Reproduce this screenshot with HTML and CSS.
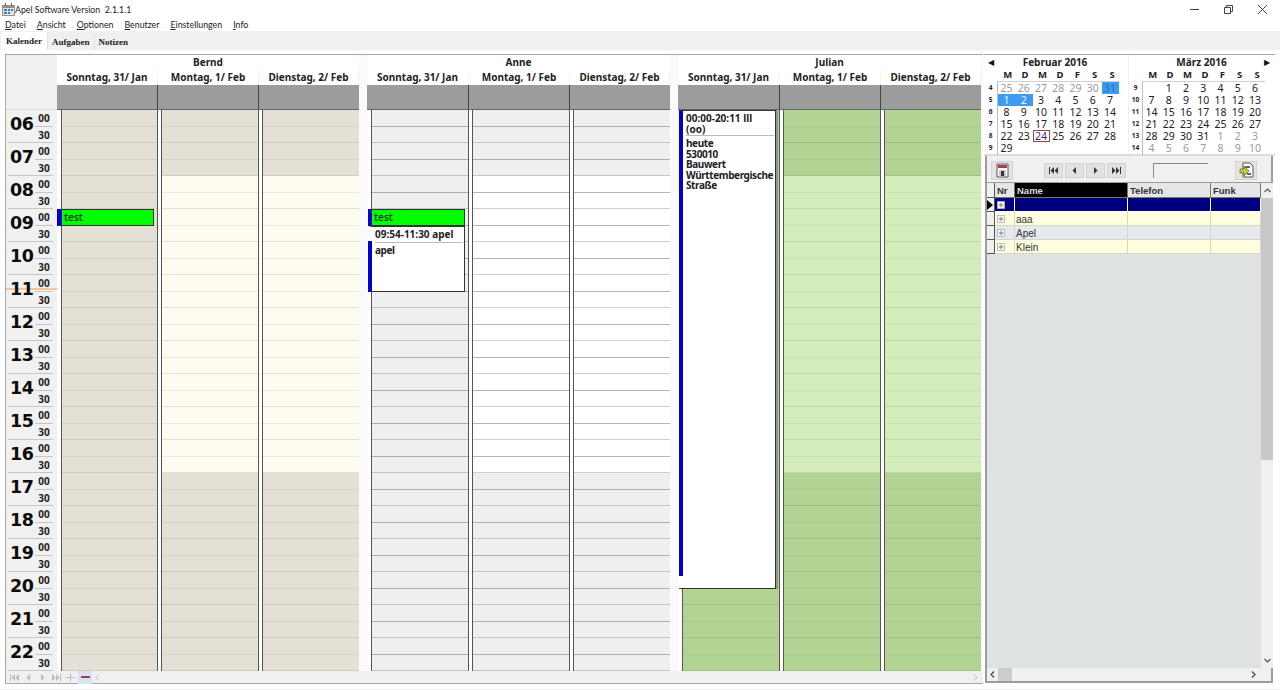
FILE: index.html
```html
<!DOCTYPE html>
<html lang="de">
<head>
<meta charset="utf-8">
<title>Apel Software</title>
<link rel="stylesheet" href="styles.css">
</head>
<body>
<svg class="defs" width="0" height="0">
  <symbol id="first" viewBox="0 0 9 7"><path d="M0 0h1v7H0zM5 0v7L1.500 3.500zM9 0v7L5.500 3.500z"/></symbol>
  <symbol id="prev" viewBox="0 0 9 7"><path d="M6 0v7L2.500 3.500z"/></symbol>
  <symbol id="next" viewBox="0 0 9 7"><path d="M3 0v7l3.500-3.500z"/></symbol>
  <symbol id="last" viewBox="0 0 9 7"><path d="M8 0h1v7H8zM4 0v7l3.500-3.500zM0 0v7l3.500-3.500z"/></symbol>
  <symbol id="plusbox" viewBox="0 0 9 9"><path d="M.5.500h8v8h-8z" fill="#f4f6f8" stroke="#aab4bc"/><path d="M2 4h5v1H2zM4 2h1v5H4z" fill="#777"/></symbol>
</svg>

<header class="titlebar">
  <svg class="appicon" width="13" height="13" viewBox="0 0 13 13"><path d="M0 2h13v11H0z" fill="#9a8f88"/><path d="M1 5h11v7H1z" fill="#dfe6ee"/><path d="M2 6h3v2H2zM6 6h2v2H6zM9 6h2v2H9zM2 9h3v2H2zM6 9h2v2H6z" fill="#3f78b5"/><path d="M3 0h1v3H3zM9 0h1v3H9z" fill="#7a5a50"/></svg>
  <span class="apptitle">Apel Software Version&nbsp; 2.1.1.1</span>
  <div class="winbtns">
    <svg width="11" height="11" viewBox="0 0 11 11"><path d="M1 5.500h9" stroke="#444"/></svg>
    <svg width="11" height="11" viewBox="0 0 11 11"><path d="M1.500 3.500h6v6h-6zM3.500 3.500v-2h6v6h-2" fill="none" stroke="#444"/></svg>
    <svg width="11" height="11" viewBox="0 0 11 11"><path d="M1 1l9 9M10 1l-9 9" stroke="#444"/></svg>
  </div>
</header>

<nav class="menubar">
  <span><u>D</u>atei</span><span><u>A</u>nsicht</span><span><u>O</u>ptionen</span><span><u>B</u>enutzer</span><span><u>E</u>instellungen</span><span><u>I</u>nfo</span>
</nav>

<div class="tabs">
  <span class="tab active">Kalender</span><span class="tab">Aufgaben</span><span class="tab">Notizen</span>
</div>

<main class="workspace">
  <section class="calendar">
    <div class="calgrid">
      <div class="timecol">
        <div class="timehead"></div>
        <div class="hours">
          <div class="hour"><b>06</b><div class="mins"><span>00</span><span>30</span></div></div>
          <div class="hour"><b>07</b><div class="mins"><span>00</span><span>30</span></div></div>
          <div class="hour"><b>08</b><div class="mins"><span>00</span><span>30</span></div></div>
          <div class="hour"><b>09</b><div class="mins"><span>00</span><span>30</span></div></div>
          <div class="hour"><b>10</b><div class="mins"><span>00</span><span>30</span></div></div>
          <div class="hour"><i class="nowline"></i><b>11</b><div class="mins"><span>00</span><span>30</span></div></div>
          <div class="hour"><b>12</b><div class="mins"><span>00</span><span>30</span></div></div>
          <div class="hour"><b>13</b><div class="mins"><span>00</span><span>30</span></div></div>
          <div class="hour"><b>14</b><div class="mins"><span>00</span><span>30</span></div></div>
          <div class="hour"><b>15</b><div class="mins"><span>00</span><span>30</span></div></div>
          <div class="hour"><b>16</b><div class="mins"><span>00</span><span>30</span></div></div>
          <div class="hour"><b>17</b><div class="mins"><span>00</span><span>30</span></div></div>
          <div class="hour"><b>18</b><div class="mins"><span>00</span><span>30</span></div></div>
          <div class="hour"><b>19</b><div class="mins"><span>00</span><span>30</span></div></div>
          <div class="hour"><b>20</b><div class="mins"><span>00</span><span>30</span></div></div>
          <div class="hour"><b>21</b><div class="mins"><span>00</span><span>30</span></div></div>
          <div class="hour"><b>22</b><div class="mins"><span>00</span><span>30</span></div></div>
        </div>
      </div>

      <div class="res bernd">
        <div class="resname">Bernd</div>
        <div class="heads"><span>Sonntag, 31/ Jan</span><span>Montag, 1/ Feb</span><span>Dienstag, 2/ Feb</span></div>
        <div class="strips"><i></i><i></i><i></i></div>
        <div class="days">
          <div class="day sun"><div class="cells"><div class="s1"></div><div class="s2"></div><div class="s3"></div></div>
            <div class="ev evb"><div class="evhead">test</div></div>
          </div>
          <div class="day"><div class="cells"><div class="s1"></div><div class="s2"></div><div class="s3"></div></div></div>
          <div class="day"><div class="cells"><div class="s1"></div><div class="s2"></div><div class="s3"></div></div></div>
        </div>
      </div>

      <div class="res anne">
        <div class="resname">Anne</div>
        <div class="heads"><span>Sonntag, 31/ Jan</span><span>Montag, 1/ Feb</span><span>Dienstag, 2/ Feb</span></div>
        <div class="strips"><i></i><i></i><i></i></div>
        <div class="days">
          <div class="day sun"><div class="cells"><div class="s1"></div><div class="s2"></div><div class="s3"></div></div>
            <div class="ev eva"><div class="evhead">test</div></div>
            <div class="box boxa"><div class="boxtime">09:54-11:30 apel</div><div class="boxbody">apel</div></div>
          </div>
          <div class="day"><div class="cells"><div class="s1"></div><div class="s2"></div><div class="s3"></div></div></div>
          <div class="day"><div class="cells"><div class="s1"></div><div class="s2"></div><div class="s3"></div></div></div>
        </div>
      </div>

      <div class="res julian">
        <div class="resname">Julian</div>
        <div class="heads"><span>Sonntag, 31/ Jan</span><span>Montag, 1/ Feb</span><span>Dienstag, 2/ Feb</span></div>
        <div class="strips"><i></i><i></i><i></i></div>
        <div class="days">
          <div class="day sun"><div class="cells"><div class="s1"></div><div class="s2"></div><div class="s3"></div></div>
            <div class="box boxj"><div class="boxtime">00:00-20:11 lll<br>(oo)</div><div class="boxbody">heute<br>530010<br>Bauwert<br>Württembergische<br>Straße</div></div>
          </div>
          <div class="day"><div class="cells"><div class="s1"></div><div class="s2"></div><div class="s3"></div></div></div>
          <div class="day"><div class="cells"><div class="s1"></div><div class="s2"></div><div class="s3"></div></div></div>
        </div>
      </div>
    </div>
    <div class="calbar">
      <svg class="ci" width="9" height="7"><use href="#first"/></svg>
      <svg class="ci" width="9" height="7"><use href="#prev"/></svg>
      <svg class="ci" width="9" height="7"><use href="#next"/></svg>
      <svg class="ci" width="9" height="7"><use href="#last"/></svg>
      <svg class="ci" width="9" height="9" viewBox="0 0 9 9"><path d="M0 4h9v1H0zM4 0h1v9H4z"/></svg>
      <span class="minus"><svg width="9" height="3" viewBox="0 0 9 3"><path d="M0 0h9v2H0z" fill="#c0304c"/></svg></span>
      <svg class="ci" width="5" height="7" viewBox="0 0 5 7"><path d="M4 .500L1 3.500l3 3" fill="none" stroke="#bbb"/></svg>
      <svg class="ci right" width="5" height="7" viewBox="0 0 5 7"><path d="M1 .500l3 3-3 3" fill="none" stroke="#bbb"/></svg>
    </div>
  </section>

  <aside class="side">
    <div class="months">
      <div class="month">
        <div class="mtitle"><span class="arr">◀</span><span class="mname">Februar 2016</span></div>
        <div class="dow"><b>M</b><b>D</b><b>M</b><b>D</b><b>F</b><b>S</b><b>S</b></div>
        <div class="mbody">
          <div class="wk"><b>4</b><b>5</b><b>6</b><b>7</b><b>8</b><b>9</b></div>
          <div class="dgrid">
            <span class="g">25</span><span class="g">26</span><span class="g">27</span><span class="g">28</span><span class="g">29</span><span class="g">30</span><span class="sel g">31</span>
            <span class="sel">1</span><span class="sel">2</span><span>3</span><span>4</span><span>5</span><span>6</span><span>7</span>
            <span>8</span><span>9</span><span>10</span><span>11</span><span>12</span><span>13</span><span>14</span>
            <span>15</span><span>16</span><span>17</span><span>18</span><span>19</span><span>20</span><span>21</span>
            <span>22</span><span>23</span><span class="today">24</span><span>25</span><span>26</span><span>27</span><span>28</span>
            <span>29</span>
          </div>
        </div>
      </div>
      <div class="month">
        <div class="mtitle"><span class="mname">März 2016</span><span class="arr">▶</span></div>
        <div class="dow"><b>M</b><b>D</b><b>M</b><b>D</b><b>F</b><b>S</b><b>S</b></div>
        <div class="mbody">
          <div class="wk"><b>9</b><b>10</b><b>11</b><b>12</b><b>13</b><b>14</b></div>
          <div class="dgrid">
            <span></span><span>1</span><span>2</span><span>3</span><span>4</span><span>5</span><span>6</span>
            <span>7</span><span>8</span><span>9</span><span>10</span><span>11</span><span>12</span><span>13</span>
            <span>14</span><span>15</span><span>16</span><span>17</span><span>18</span><span>19</span><span>20</span>
            <span>21</span><span>22</span><span>23</span><span>24</span><span>25</span><span>26</span><span>27</span>
            <span>28</span><span>29</span><span>30</span><span>31</span><span class="g">1</span><span class="g">2</span><span class="g">3</span>
            <span class="g">4</span><span class="g">5</span><span class="g">6</span><span class="g">7</span><span class="g">8</span><span class="g">9</span><span class="g">10</span>
          </div>
        </div>
      </div>
    </div>

    <div class="contacts">
      <div class="toolbar">
        <button class="bigbtn"><svg width="13" height="15" viewBox="0 0 13 15"><path d="M1 1h11v13H1z" fill="#fff" stroke="#555"/><path d="M2 2h9v3H2z" fill="#b03a4a"/><path d="M3 7h7v6H3z" fill="#c9c9c9"/><path d="M5 8h3v5H5z" fill="#333"/></svg></button>
        <div class="navbtns">
          <button class="nb"><svg width="9" height="7"><use href="#first"/></svg></button>
          <button class="nb"><svg width="9" height="7"><use href="#prev"/></svg></button>
          <button class="nb"><svg width="9" height="7"><use href="#next"/></svg></button>
          <button class="nb"><svg width="9" height="7"><use href="#last"/></svg></button>
        </div>
        <div class="field"></div>
        <button class="bigbtn last"><svg width="15" height="16" viewBox="0 0 15 16"><path d="M4 1h7l3 3v11H4z" fill="#fff" stroke="#555"/><path d="M6 4h5v2H6zM8 11h4v2H8z" fill="#666"/><path d="M1 7h4V4l5 5-5 5v-3H1z" fill="#c6c83a" stroke="#4d6a20" stroke-width=".7"/></svg></button>
      </div>
      <div class="gridwrap">
        <div class="tablepart">
          <div class="trow thead"><span class="ind"></span><span class="cn">Nr</span><span class="cname act">Name</span><span class="ct">Telefon</span><span class="cf">Funk</span></div>
          <div class="trow navy"><span class="ind cur"><svg width="6" height="10" viewBox="0 0 6 10"><path d="M0 0l6 5-6 5z" fill="#000"/></svg></span><span class="cn"><svg width="8" height="8"><use href="#plusbox"/></svg></span><span class="cname"></span><span class="ct"></span><span class="cf"></span></div>
          <div class="trow cream"><span class="ind"></span><span class="cn"><svg width="8" height="8"><use href="#plusbox"/></svg></span><span class="cname">aaa</span><span class="ct"></span><span class="cf"></span></div>
          <div class="trow grey"><span class="ind"></span><span class="cn"><svg width="8" height="8"><use href="#plusbox"/></svg></span><span class="cname">Apel</span><span class="ct"></span><span class="cf"></span></div>
          <div class="trow cream"><span class="ind"></span><span class="cn"><svg width="8" height="8"><use href="#plusbox"/></svg></span><span class="cname">Klein</span><span class="ct"></span><span class="cf"></span></div>
        </div>
        <div class="vscroll">
          <svg class="sarrow" width="7" height="5" viewBox="0 0 7 5"><path d="M.500 4l3-3 3 3" fill="none" stroke="#555" stroke-width="1.200"/></svg>
          <div class="vthumb"></div>
          <svg class="sarrow down" width="7" height="5" viewBox="0 0 7 5"><path d="M.500 1l3 3 3-3" fill="none" stroke="#555" stroke-width="1.200"/></svg>
        </div>
      </div>
      <div class="hscroll">
        <svg width="5" height="7" viewBox="0 0 5 7"><path d="M4 .500L1 3.500l3 3" fill="none" stroke="#444" stroke-width="1.200"/></svg>
        <div class="hthumb"></div>
        <svg class="hend" width="5" height="7" viewBox="0 0 5 7"><path d="M1 .500l3 3-3 3" fill="none" stroke="#444" stroke-width="1.200"/></svg>
      </div>
    </div>
  </aside>
</main>
<div class="statusbar"></div>
</body>
</html>
```

FILE: styles.css
```css
* { box-sizing: border-box; }
html, body { margin: 0; padding: 0; }
body {
  width: 1280px;
  height: 690px;
  overflow: hidden;
  display: flex;
  flex-direction: column;
  background: #fff;
  color: #111;
  font-family: "Noto Sans", sans-serif;
}
.defs { position: absolute; }
button { padding: 0; font: inherit; }

/* title + menu */
.titlebar { height: 18px; display: flex; align-items: center; padding-left: 2px; flex: none; }
.apptitle { font: 8.800px "Lato", sans-serif; color: #222; }
.winbtns { margin-left: auto; display: flex; gap: 23px; padding-right: 12px; }
.menubar { height: 13px; flex: none; display: flex; gap: 11px; padding-left: 5px; font: 8.800px/13px "Lato", sans-serif; color: #222; }
.tabs { height: 19px; flex: none; background: #f0f0f0; display: flex; align-items: flex-end; padding-left: 1px; }
.tab { font: bold 9px "Liberation Serif", serif; padding: 0 4px; height: 16px; line-height: 16px; border-left: 1px solid #e2e2e2; color: #222; }
.tab.active { background: #fff; height: 18px; line-height: 18px; padding: 0 5px; border: 0; }

/* workspace */
.workspace { flex: none; height: 635px; margin-top: 4px; display: flex; padding-left: 5px; }
.calendar { width: 978px; height: 630px; border: 1px solid #a6a6a6; border-width: 1px 0 1px 1px; display: flex; flex-direction: column; background: #f0f0f0; }
.calgrid { display: flex; height: 616px; background: #fafafa; flex: none; }

.timecol { width: 51px; flex: none; background: #f1f1f1; }
.timehead { height: 55px; border-bottom: 1px solid #d8d8d8; }
.hour { height: 33px; display: flex; position: relative; margin-left: 2px; margin-right: 4px; border-bottom: 1px solid #c6c6c6; }
.hour b { position: relative; font: bold 17.500px "DejaVu Sans", sans-serif; width: 27px; padding-left: 2px; line-height: 28px; letter-spacing: -.4px; color: #0c0c0c; }
.mins { display: flex; flex-direction: column; flex: 1; position: relative; }
.mins span { font: bold 10px/16px "Noto Sans", sans-serif; height: 16px; text-align: center; color: #222; }
.mins span:first-child { border-bottom: 1px solid #c6c6c6; height: 17px; }
.nowline { position: absolute; left: -2px; right: -4px; top: 13px; height: 2px; background: #f6c49a; }

.res { flex: none; display: flex; flex-direction: column; margin-right: 8px; background: #fff; --cols: 102px 101px 100px; }
.res.bernd { --cols: 101px 101px 100px;
  --off: #e4e0d6; --on: #fffbf0; --offh: #d6d2c8; --offl: #cfcbc0; --onh: #ece8dc; --onl: #e4e0d4; }
.res.anne { --off: #efefef; --on: #ffffff; --offh: #aeaeae; --offl: #c4c4c4; --onh: #b4b4b4; --onl: #cfcfcf; }
.res.julian { margin-right: 0; --off: #b1d495; --on: #d4ecb9; --offh: #a9cc8d; --offl: #9fc283; --onh: #cbe3b0; --onl: #bfd9a4; }

.resname { height: 15px; text-align: center; font: bold 10px/15px "Noto Sans", sans-serif; color: #222; }
.heads, .strips, .days { display: grid; grid-template-columns: var(--cols); }
.heads { height: 15px; }
.heads span { text-align: center; font: bold 10px/15px "Noto Sans", sans-serif; color: #222; border-right: 1px solid #f4f4f4; }
.strips { height: 25px; }
.strips i { background: #9c9c9c; border-right: 1px solid #444; border-bottom: 1px solid #666; }
.strips i:last-child { border-right: 0; }

.day { position: relative; padding-left: 3px; height: 561px; }
.day.sun { padding-left: 4px; }
.cells { height: 561px; border-left: 1px solid #555; border-right: 1px solid #555; }
.day:last-child .cells { border-right: 0; }
.s1, .s3 {
  background: repeating-linear-gradient(to bottom,
    var(--off) 0 16px, var(--offh) 16px 17px, var(--off) 17px 32px, var(--offl) 32px 33px);
}
.s2 {
  background: repeating-linear-gradient(to bottom,
    var(--on) 0 16px, var(--onh) 16px 17px, var(--on) 17px 32px, var(--onl) 32px 33px);
}
.sun .s2 {
  background: repeating-linear-gradient(to bottom,
    var(--off) 0 16px, var(--offh) 16px 17px, var(--off) 17px 32px, var(--offl) 32px 33px);
}
.s1 { height: 66px; }
.s2 { height: 297px; }
.s3 { height: 198px; }

/* events */
.ev { position: absolute; height: 17px; border: 1px solid #333; border-left: 5px solid #0000d0; background: #00ff00; }
.evb { left: 0; top: 99px; width: 97px; }
.eva { left: 1px; top: 99px; width: 97px; border-left-width: 4px; }
.evhead { font: 600 10px/14px "Noto Sans", sans-serif; padding-left: 2px; color: #0f3d0f; }
.box { position: absolute; background: #fff; border: 1px solid #333; border-left: 4px solid #0000d0; box-shadow: 2px 0 0 #8d9a84; font: bold 10px/10.500px "Noto Sans", sans-serif; color: #222; }
.boxa { left: 1px; top: 116px; width: 97px; height: 66px; border-left: 4px solid #fff; box-shadow: none; }
.boxa::before { content: ""; position: absolute; left: -4px; top: 14px; bottom: -1px; width: 4px; background: #0000d0; }
.boxj { left: 1px; top: 0; width: 97px; height: 479px; }
.boxj::after { content: ""; position: absolute; left: -4px; bottom: -1px; width: 4px; height: 12px; background: #fff; border-bottom: 1px solid #333; }
.boxtime { margin: 0 1px 0 3px; padding: 2px 0 1px; border-bottom: 1px solid #bbb; white-space: nowrap; }
.boxbody { margin-left: 3px; padding-top: 2px; letter-spacing: -.4px; }
.boxa .boxtime { padding: 2px 0 2px; }

.calbar { flex: 1; display: flex; align-items: center; gap: 5px; padding-left: 4px; }
.ci { fill: #bdbdbd; }
.ci.right { margin-left: auto; margin-right: 5px; }
.minus { width: 14px; height: 13px; background: #d4e6f4; display: flex; align-items: center; justify-content: center; margin: 0 -2px; }

/* side */
.side { width: 291px; margin-left: 1px; height: 630px; display: flex; flex-direction: column; border-top: 1px solid #a6a6a6; }
.months { height: 101px; flex: none; display: flex; background: #fff; border-bottom: 2px solid #dcdcdc; }
.month { width: 144px; flex: none; }
.month + .month { border-left: 1px solid #f0f0f0; }
.mtitle { height: 14px; display: flex; align-items: center; }
.mname { flex: 1; text-align: center; font: bold 10px/14px "Noto Sans", sans-serif; color: #222; padding-right: 14px; }
.arr { font: 8px "DejaVu Sans", sans-serif; width: 12px; padding-left: 4px; color: #111; }
.month + .month .mname { padding: 0 0 0 12px; }
.month + .month .arr { padding-left: 2px; width: 10px; }
.dow { display: grid; grid-template-columns: repeat(7, 17.400px); padding-left: 15px; height: 12px; font: bold 9.500px/12px "Noto Sans", sans-serif; text-align: center; color: #222; }
.dow b { font-weight: 700; }
.mbody { display: flex; }
.wk { width: 13px; flex: none; display: flex; flex-direction: column; padding-top: 1px; }
.wk b { height: 12px; font: bold 6.500px/12px "Noto Sans", sans-serif; text-align: center; color: #222; }
.dgrid { display: grid; grid-template-columns: repeat(7, 17.250px); grid-auto-rows: 12px; width: 123px; height: 74px; border-left: 1px solid #bdbdbd; border-top: 1px solid #d0d0d0; align-content: start; }
.dgrid span { font: 10.500px/12px "Noto Sans", sans-serif; text-align: center; color: #222; }
.dgrid .g { color: #9b9b9b; }
.dgrid .sel { background: #3d9bf0; color: #e8f3fd; }
.dgrid .sel.g { color: #2f6fb0; }
.dgrid .today { border: 1px solid #a04048; line-height: 10px; color: #30307a; }

.contacts { flex: 1; width: 288px; margin-left: 1px; margin-bottom: 1px; display: flex; flex-direction: column; border: 2px solid #9c9c9c; border-top: 0; background: #f0f0f0; }
.toolbar { height: 27px; flex: none; display: flex; align-items: center; padding: 2px 0 0 4px; border-bottom: 1px solid #9c9c9c; }
.bigbtn { width: 22px; height: 19px; background: #e4e4e4; border: 1px solid #d4d4d4; display: flex; align-items: center; justify-content: center; }
.bigbtn.last { margin-left: 27px; }
.navbtns { display: flex; gap: 2px; margin-left: 31px; }
.nb { width: 19px; height: 15px; background: #e2e2e2; border: 1px solid #d2d2d2; display: flex; align-items: center; justify-content: center; fill: #333; }
.field { width: 55px; height: 15px; margin-left: 27px; border-top: 1px solid #888; border-left: 1px solid #888; background: #f0f0f0; }

.gridwrap { flex: 1; display: flex; min-height: 0; }
.tablepart { flex: 1; background: #dfe2e3; }
.trow { display: grid; grid-template-columns: 8px 20px 113px 83px 50px; height: 14px; font: 10px/13px "Liberation Sans", sans-serif; color: #333; }
.trow span { border-right: 1px solid #fff; border-bottom: 1px solid #fff; padding-left: 2px; display: flex; align-items: center; overflow: hidden; }
.trow .cname { padding-top: 1px; padding-left: 1px; }
.trow .ind { background: #f0f0f0; border-right: 1px solid #555; border-bottom: 1px solid #555; padding: 0; }
.thead { height: 15px; background: #e4e6e8; font: 700 9.500px/13px "Liberation Sans", sans-serif; color: #333; }
.thead span { border-right: 1px solid #777; border-bottom: 1px solid #777; }
.thead .act { background: #000; color: #ddd; border-right: 1px solid #777; }
.trow.thead .cname { padding-top: 0; padding-left: 2px; }
.navy span { background: #00007f; }
.navy .ind.cur { background: #f0f0f0; }
.cream span { background: #ffffe0; border-right-color: #d8d8c8; border-bottom-color: #d8d8c8; }
.grey span { background: #e6e9ea; border-right-color: #d0d4d4; border-bottom-color: #d0d4d4; }
.cream .ind, .grey .ind { background: #f0f0f0; border-right: 1px solid #555; border-bottom: 1px solid #555; }

.vscroll { width: 12px; flex: none; background: #f0f0f0; display: flex; flex-direction: column; align-items: center; }
.sarrow { margin: 5px 0; flex: none; }
.sarrow.down { margin-top: auto; margin-bottom: 5px; }
.vthumb { width: 12px; height: 262px; background: #c8c8c8; }
.hscroll { height: 13px; flex: none; background: #f0f0f0; display: flex; align-items: center; padding-left: 3px; }
.hthumb { width: 14px; height: 13px; margin-left: 3px; background: #cdcdcd; }
.hend { margin-left: 239px; }
.statusbar { height: 3px; flex: none; background: #f0f0f0; }
```
